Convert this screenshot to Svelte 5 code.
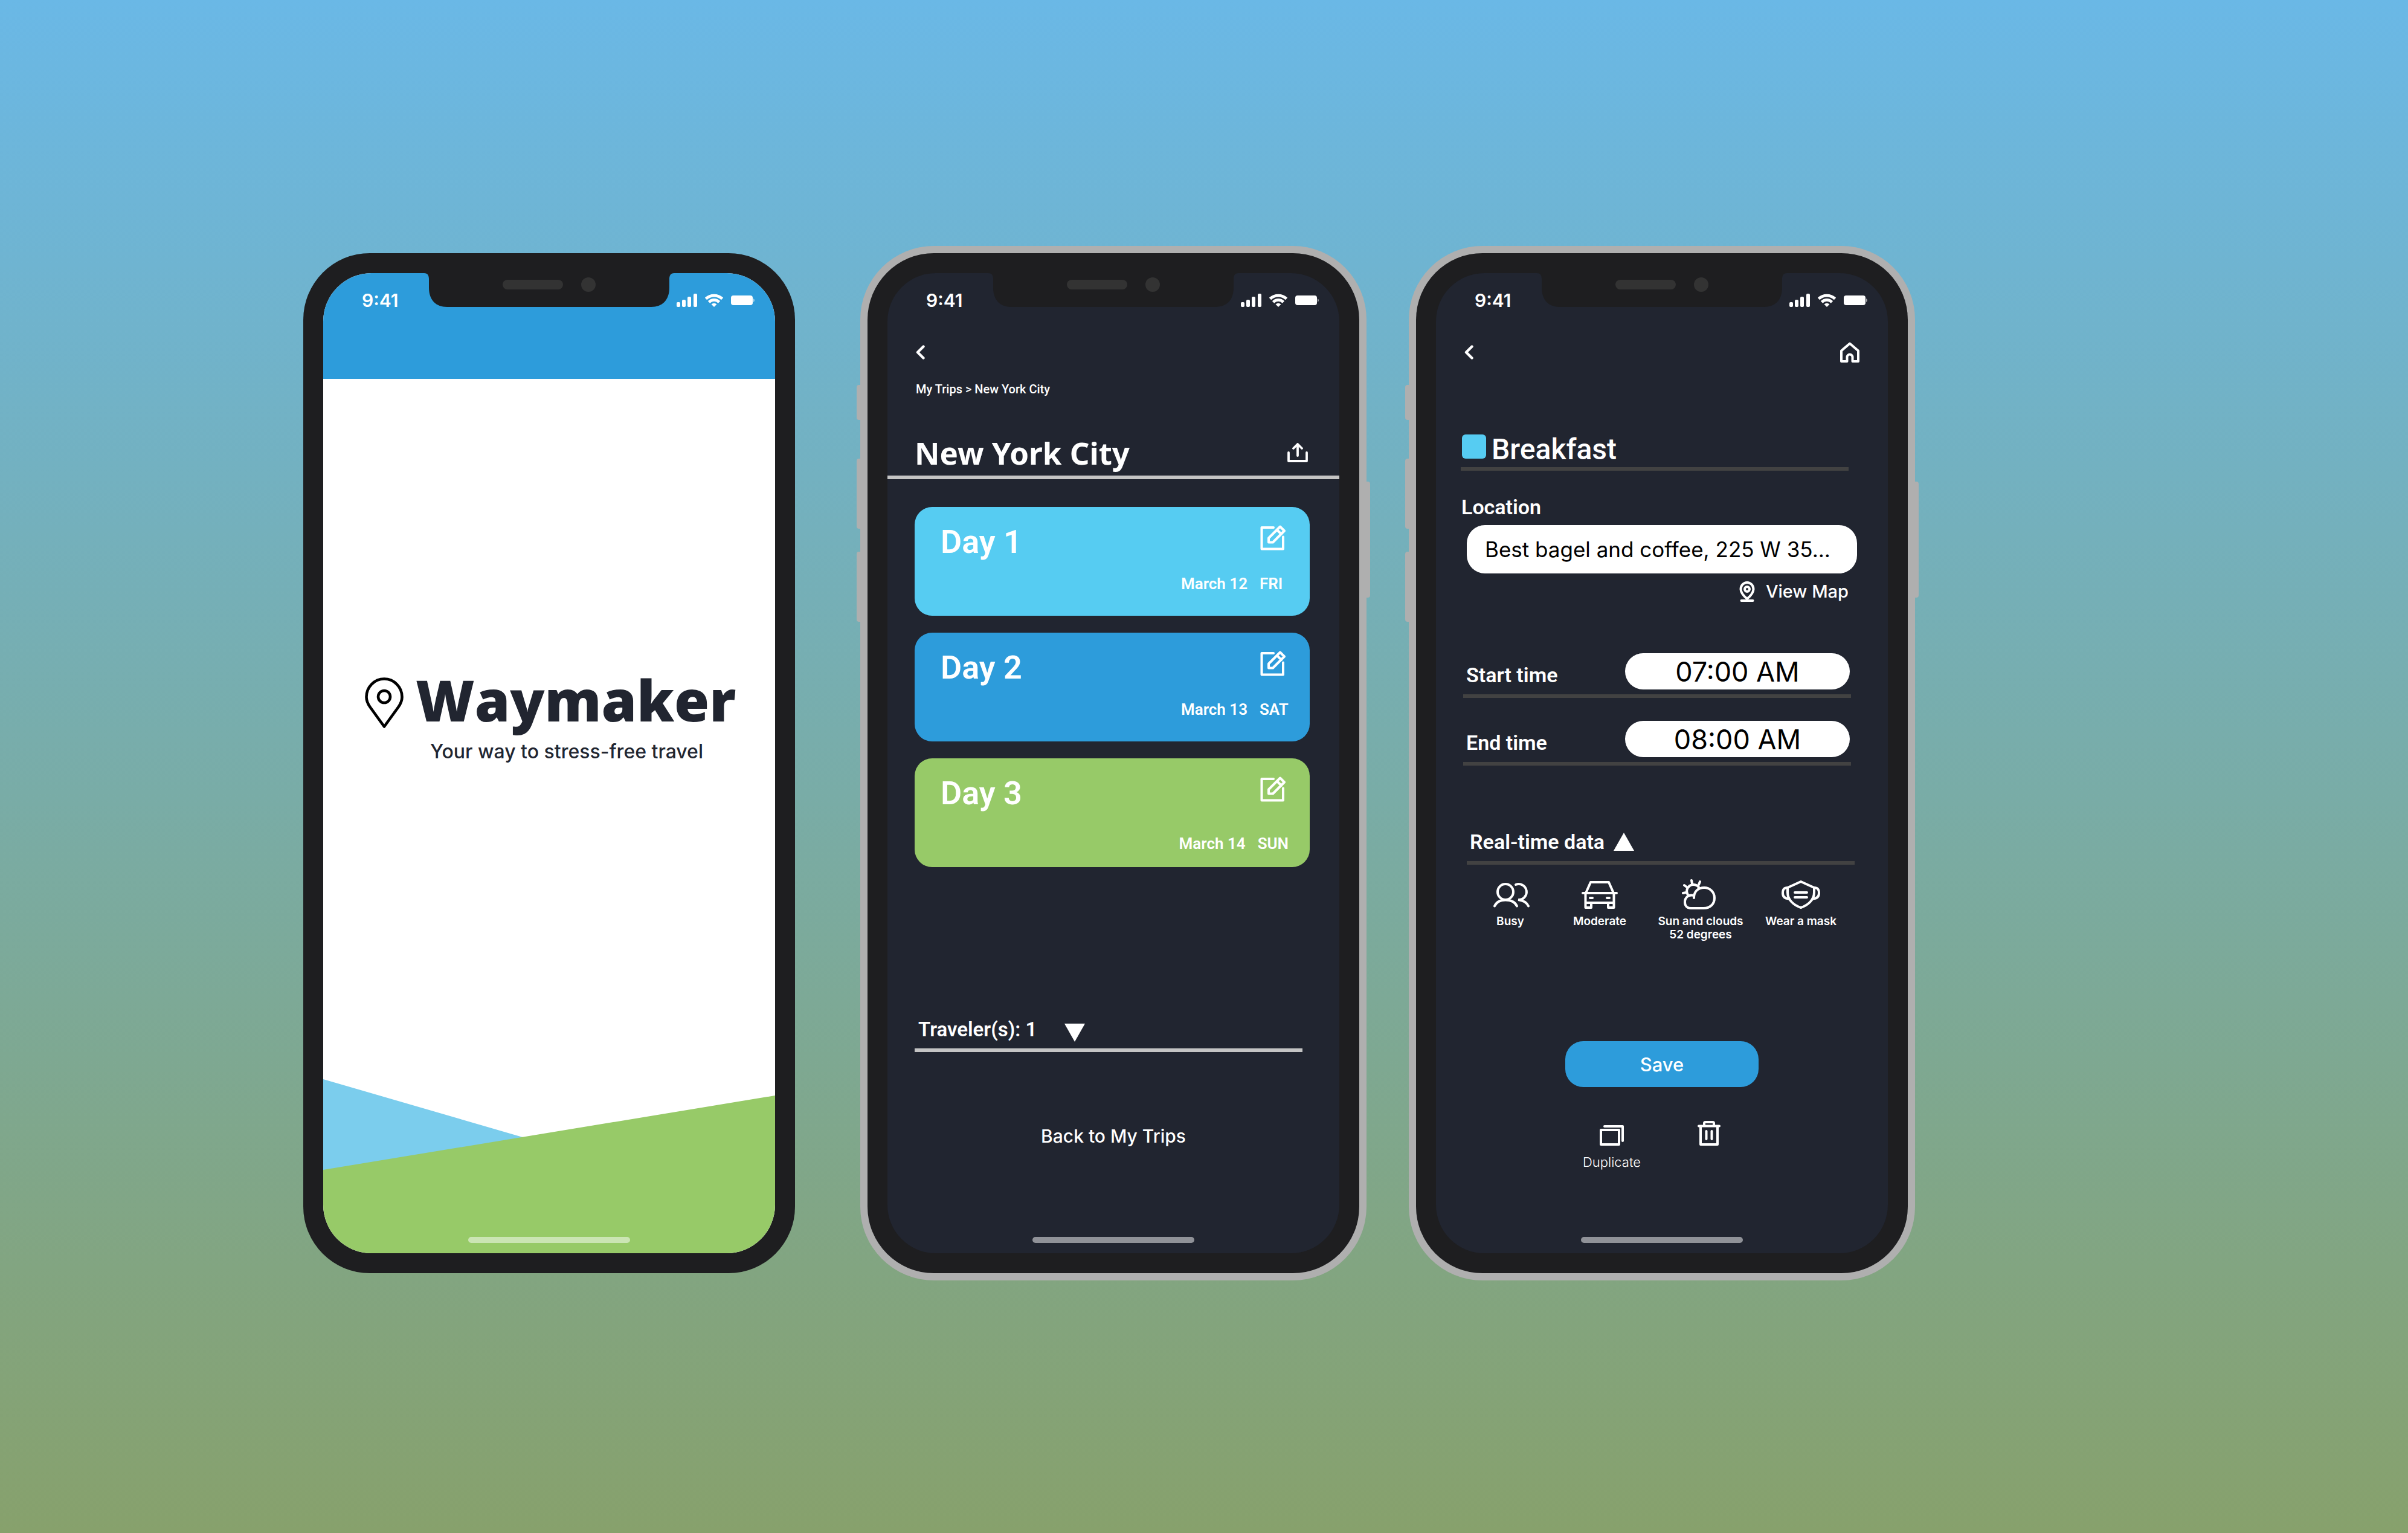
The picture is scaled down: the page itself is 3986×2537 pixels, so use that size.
<script>
  const days = [
    { name: 'Day 1', date: 'March 12', weekday: 'FRI', tone: 'sky' },
    { name: 'Day 2', date: 'March 13', weekday: 'SAT', tone: 'blue' },
    { name: 'Day 3', date: 'March 14', weekday: 'SUN', tone: 'green' }
  ];

  let location = $state('Best bagel and coffee, 225 W 35...');
  let startTime = $state('07:00 AM');
  let endTime = $state('08:00 AM');
</script>

{#snippet statusBar()}
  <div class="status">
    <span class="clock">9:41</span>
    <svg class="notch" width="414" height="56" viewBox="0 0 414 56" aria-hidden="true">
      <path class="notch-fill" d="M0 0C6 0 8 4 8 10V24C8 45 20 56 38 56H376C394 56 406 45 406 24V10C406 4 408 0 414 0Z" />
      <rect class="lens" x="130" y="11" width="100" height="16" rx="8" />
      <circle class="lens" cx="272" cy="19" r="12" />
    </svg>
    <div class="signals">
      <svg width="34" height="22" viewBox="0 0 34 22" fill="#fff" aria-hidden="true">
        <rect x="0" y="14" width="6" height="8" rx="2" />
        <rect x="9" y="10" width="6" height="12" rx="2" />
        <rect x="18" y="5" width="6" height="17" rx="2" />
        <rect x="28" y="0" width="6" height="22" rx="2" />
      </svg>
      <svg width="30" height="22" viewBox="0 0 30 22" fill="none" stroke="#fff" stroke-width="4.800" aria-hidden="true">
        <path d="M1.500 8.500A19.500 19.500 0 0 1 28.500 8.500" />
        <path d="M6.500 14A12 12 0 0 1 23.500 14" />
        <path d="M10.500 17.500Q15 14 19.500 17.500L15 22Z" fill="#fff" stroke="none" />
      </svg>
      <svg width="39" height="16" viewBox="0 0 39 16" fill="#fff" aria-hidden="true">
        <rect width="36" height="16" rx="4" />
        <path d="M37 5Q39 6 39 8T37 11Z" opacity="0.6" />
      </svg>
    </div>
  </div>
{/snippet}

{#snippet sideButtons()}
  <i class="key mute"></i>
  <i class="key up"></i>
  <i class="key down"></i>
  <i class="key power"></i>
{/snippet}

{#snippet backLink()}
  <a class="icon" href="#back" aria-label="Back">
    <svg width="15" height="24" viewBox="0 0 15 24" fill="none" stroke="#fff" stroke-width="4.400" stroke-linecap="round" stroke-linejoin="round">
      <path d="M12.500 2.500 3 12 12.500 21.500" />
    </svg>
  </a>
{/snippet}

<main>
  <section class="phone first" aria-label="Welcome">
    <div class="bezel">
      <div class="screen white">
        <header class="banner">{@render statusBar()}</header>
        <div class="brand">
          <svg width="64" height="84" viewBox="0 0 64 84" fill="none" stroke="#000" stroke-width="4.600" stroke-linejoin="round" aria-hidden="true">
            <path d="M32 2.500A29.500 30 0 0 1 61.500 32.500C61.500 39 59 44 55.500 49L32 81.500 8.500 49C5 44 2.500 39 2.500 32.500A29.500 30 0 0 1 32 2.500Z" />
            <circle cx="32" cy="32" r="10" />
          </svg>
          <div class="brand-text">
            <h1>Waymaker</h1>
            <p>Your way to stress-free travel</p>
          </div>
        </div>
        <svg class="hills" viewBox="0 0 748 288" aria-hidden="true">
          <path fill="#7bcded" d="M0 0 344 100 0 152Z" />
          <path fill="#97ca68" d="M0 150 748 27V288H0Z" />
        </svg>
        <div class="home-bar"></div>
      </div>
    </div>
  </section>

  <section class="phone framed" aria-label="Trip">
    {@render sideButtons()}
    <div class="bezel">
      <div class="screen dark">
        {@render statusBar()}
        <nav class="topbar">{@render backLink()}</nav>
        <p class="crumbs">My Trips &gt; New York City</p>
        <header class="trip">
          <h2>New York City</h2>
          <button class="icon" aria-label="Share">
            <svg width="34" height="32" viewBox="0 0 34 32" fill="none" stroke="#fff" stroke-width="3.800" stroke-linecap="round" stroke-linejoin="round">
              <path d="M2 16V30H32V16M17 21V2.500M10 9 17 2 24 9" />
            </svg>
          </button>
        </header>
        <div class="days">
          {#each days as day}
            <article class={['day', day.tone]}>
              <div class="day-top">
                <h3>{day.name}</h3>
                <button class="icon" aria-label="Edit {day.name}">
                  <svg width="42" height="42" viewBox="0 0 42 42" fill="none" stroke="#fff" stroke-width="4" stroke-linecap="round" stroke-linejoin="round">
                    <path d="M22 4H2.500V39.500H38V19.500" />
                    <path d="M33 2.500 40 9.500 21 28.500H14V21.500ZM28 8 35 15" />
                  </svg>
                </button>
              </div>
              <div class="day-date"><span>{day.date}</span><span class="weekday">{day.weekday}</span></div>
            </article>
          {/each}
        </div>
        <button class="travelers">
          <span>Traveler(s): 1</span>
          <svg width="34" height="30" viewBox="0 0 34 30" fill="#fff" aria-hidden="true"><path d="M0 0H34L17 30Z" /></svg>
        </button>
        <a class="back-trips" href="#trips">Back to My Trips</a>
        <div class="home-bar"></div>
      </div>
    </div>
  </section>

  <section class="phone framed" aria-label="Activity">
    {@render sideButtons()}
    <div class="bezel">
      <form class="screen dark" onsubmit={(e) => e.preventDefault()}>
        {@render statusBar()}
        <nav class="topbar">
          {@render backLink()}
          <a class="icon" href="#home" aria-label="Home">
            <svg width="32" height="34" viewBox="0 0 32 34" fill="none" stroke="#fff" stroke-width="4" stroke-linejoin="round">
              <path d="M2 14.500 16 2.500 30 14.500V32H20.500V25A4.500 4.500 0 0 0 11.500 25V32H2Z" />
            </svg>
          </a>
        </nav>
        <header class="activity">
          <span class="swatch"></span>
          <h2>Breakfast</h2>
        </header>
        <label class="location" for="location">Location</label>
        <input class="place" id="location" type="text" bind:value={location} />
        <a class="map" href="#map">
          <svg width="26" height="34" viewBox="0 0 26 34" fill="none" stroke="#fff" stroke-width="4" stroke-linecap="round" aria-hidden="true">
            <path d="M13 29C7 24 2.500 19 2.500 13A10.500 11 0 0 1 23.500 13C23.500 19 19 24 13 29Z" />
            <circle cx="13" cy="13" r="4" />
            <path d="M3.500 32H22.500" />
          </svg>
          <span>View Map</span>
        </a>
        <div class="times">
          <div class="time">
            <label for="start">Start time</label>
            <input id="start" type="text" bind:value={startTime} />
          </div>
          <div class="time">
            <label for="end">End time</label>
            <input id="end" type="text" bind:value={endTime} />
          </div>
        </div>
        <button class="realtime" type="button">
          <span>Real-time data</span>
          <svg width="34" height="30" viewBox="0 0 34 30" fill="#fff" aria-hidden="true"><path d="M17 0 34 30H0Z" /></svg>
        </button>
        <ul class="stats">
          <li>
            <svg width="60" height="50" viewBox="-2 -6 60 50" overflow="visible" fill="none" stroke="#fff" stroke-width="4" stroke-linecap="round" aria-hidden="true">
              <ellipse cx="20" cy="15" rx="13" ry="13" />
              <path d="M2 38.500C5 32 11 28.500 20 28.500S36 32 39 38.500M37 3A13 13 0 1 1 41 28C49 29 55 32 58 38.500" />
            </svg>
            Busy
          </li>
          <li>
            <svg width="60" height="50" viewBox="0 -3 60 50" fill="none" stroke="#fff" stroke-width="4" stroke-linecap="round" stroke-linejoin="round" aria-hidden="true">
              <path d="M2 20H58M7 20 15 2H45L53 20M6.500 20V44H16V36M53.500 20V44H44V36M6.500 36H53.500M14 28H18M42 28H46" />
            </svg>
            Moderate
          </li>
          <li>
            <svg width="56" height="50" viewBox="3 0 56 50" overflow="visible" fill="none" stroke="#fff" stroke-width="4" stroke-linecap="round" aria-hidden="true">
              <path d="M15 48H36C47 48 54 41 54 31S46 14 37 14C27 14 20 20 20 31M20 27C11 25 5 30 5 38C5 44 9 48 15 48" />
              <path d="M28.500 14A11 11 0 1 0 10 26M16 2 17 7M30 4 28 9M4 10 8 13M2 23 7 22" />
            </svg>
            <span>Sun and clouds<br />52 degrees</span>
          </li>
          <li>
            <svg width="64" height="50" viewBox="0 -2 64 50" fill="none" stroke="#fff" stroke-width="4" stroke-linecap="round" stroke-linejoin="round" aria-hidden="true">
              <path d="M32 2 54 12V20C54 32 44 41 32 45C20 41 10 32 10 20V12ZM22 20H42M22 28H42" />
              <path d="M54 12C60 12 62 15 62 21S58 30 52 30.500M10 12C4 12 2 15 2 21S6 30 12 30.500" />
            </svg>
            Wear a mask
          </li>
        </ul>
        <button class="save" type="submit">Save</button>
        <div class="actions">
          <button class="duplicate" type="button">
            <svg width="40" height="34" viewBox="0 0 40 34" fill="none" stroke="#fff" stroke-width="4" stroke-linecap="round" stroke-linejoin="round" aria-hidden="true">
              <path d="M2 8H32V32H2ZM8 2H38V26" />
            </svg>
            Duplicate
          </button>
          <button class="icon" type="button" aria-label="Delete">
            <svg width="38" height="41" viewBox="0 0 38 41" fill="none" stroke="#fff" stroke-width="4" stroke-linecap="round" stroke-linejoin="round">
              <path d="M2 8.500H36M11 8V4Q11 2 13 2H25Q27 2 27 4V8M5 9V39H33V9M14.500 17V30M23.500 17V30" />
            </svg>
          </button>
        </div>
        <div class="home-bar"></div>
      </form>
    </div>
  </section>
</main>

<style>
  :global(body) {
    margin: 0;
  }

  main {
    box-sizing: border-box;
    min-height: 100vh;
    padding: 407px 0 407px 490px;
    display: flex;
    align-items: flex-start;
    gap: 70px;
    background: linear-gradient(#6ab8e6, #87a16c);
    color: #fff;
    font-family: Inter, 'Liberation Sans', sans-serif;
  }

  h1,
  h2,
  h3,
  p,
  ul {
    margin: 0;
    padding: 0;
  }

  svg {
    display: block;
    flex: none;
  }

  a {
    color: inherit;
    text-decoration: none;
  }

  button {
    padding: 0;
    border: 0;
    background: none;
    color: inherit;
    font: inherit;
    cursor: pointer;
  }

  input {
    box-sizing: border-box;
    border: 0;
    border-radius: 30px;
    background: #fff;
    color: #000;
    font-family: inherit;
  }

  /* Device shell */
  .phone {
    position: relative;
    flex: none;
    padding: 12px;
    border-radius: 122px;
  }

  .first {
    margin-right: 26px;
  }

  .framed {
    background: #afafaf;
  }

  .key {
    position: absolute;
    left: -6px;
    width: 12px;
    border-radius: 4px 0 0 4px;
    background: #afafaf;
  }

  .mute {
    top: 230px;
    height: 58px;
  }

  .up {
    top: 352px;
    height: 116px;
  }

  .down {
    top: 506px;
    height: 116px;
  }

  .power {
    top: 390px;
    left: auto;
    right: -6px;
    height: 192px;
    border-radius: 0 4px 4px 0;
  }

  .bezel {
    position: relative;
    padding: 33px;
    border-radius: 110px;
    background: #1e1e20;
  }

  .screen {
    position: relative;
    display: flex;
    flex-direction: column;
    width: 748px;
    min-height: 1622px;
    border-radius: 80px;
    overflow: hidden;
  }

  .white {
    background: #fff;
  }

  .dark {
    background: #212530;
  }

  .status {
    display: grid;
    grid-template-columns: 1fr 414px 1fr;
    align-items: start;
    height: 56px;
  }

  .clock {
    padding: 30px 0 0 64px;
    font-size: 30px;
    line-height: 30px;
    font-weight: 600;
  }

  .notch-fill {
    fill: #1e1e20;
  }

  .lens {
    fill: #333;
  }

  .signals {
    display: flex;
    align-items: center;
    justify-content: flex-end;
    gap: 13px;
    padding: 34px 34px 0 0;
  }

  .home-bar {
    position: absolute;
    bottom: 17px;
    left: 50%;
    width: 268px;
    height: 10px;
    margin-left: -134px;
    border-radius: 5px;
    background: rgba(255, 255, 255, 0.5);
  }

  /* Welcome */
  .banner {
    height: 175px;
    background: #2d9cdb;
  }

  .brand {
    display: flex;
    align-items: flex-start;
    gap: 20px;
    padding: 483px 0 0 69px;
    color: #212530;
  }

  .brand svg {
    padding-top: 11px;
  }

  h1 {
    font-family: 'Open Sans', 'Noto Sans', sans-serif;
    font-size: 94px;
    line-height: 96px;
    font-weight: 800;
  }

  .brand-text p {
    padding: 18px 0 0 24px;
    font-size: 32px;
    line-height: 40px;
    font-weight: 500;
  }

  .hills {
    width: 100%;
    margin-top: auto;
  }

  /* Trip */
  .topbar {
    display: flex;
    align-items: center;
    justify-content: space-between;
    height: 34px;
    padding: 0 47px;
    margin-top: 58px;
  }

  .crumbs,
  h3,
  .day-date,
  .travelers,
  .realtime,
  .activity h2,
  label {
    font-family: Roboto, Inter, sans-serif;
  }

  .crumbs {
    padding: 32px 47px 0;
    font-size: 20px;
    line-height: 24px;
    font-weight: 500;
  }

  .trip {
    display: flex;
    align-items: center;
    justify-content: space-between;
    margin-top: 63px;
    padding: 0 52px 8px 45px;
    border-bottom: 6px solid #c4c4c4;
  }

  .trip h2 {
    font-family: 'Noto Sans', 'Open Sans', sans-serif;
    font-size: 51px;
    line-height: 60px;
    font-weight: 700;
  }

  .days {
    display: flex;
    flex-direction: column;
    gap: 28px;
    padding: 46px 49px 0 45px;
  }

  .day {
    box-sizing: border-box;
    min-height: 180px;
    padding: 28px 35px 0 43px;
    border-radius: 29px;
  }

  .sky {
    background: #56ccf2;
  }

  .blue {
    background: #2d9cdb;
  }

  .green {
    background: #97ca68;
  }

  .day-top {
    display: flex;
    align-items: flex-start;
    justify-content: space-between;
    padding-right: 5px;
  }

  h3 {
    font-size: 54px;
    line-height: 60px;
    font-weight: 600;
  }

  .day-top .icon {
    padding-top: 2px;
  }

  .day-date {
    display: flex;
    justify-content: flex-end;
    gap: 20px;
    padding-top: 24px;
    font-size: 26px;
    line-height: 30px;
    font-weight: 600;
  }

  .green .day-date {
    padding-top: 38px;
  }

  .weekday {
    min-width: 48px;
  }

  .travelers,
  .realtime {
    display: flex;
    font-weight: 600;
    line-height: 40px;
  }

  .travelers {
    align-items: flex-end;
    gap: 46px;
    margin: 249px 61px 0 45px;
    padding: 0 6px 11px;
    border-bottom: 6px solid #c4c4c4;
    font-size: 33px;
  }

  .back-trips {
    align-self: center;
    margin-top: 121px;
    font-size: 30px;
    line-height: 36px;
    font-weight: 500;
  }

  /* Activity */
  .activity {
    display: flex;
    align-items: flex-start;
    gap: 9px;
    margin: 119px 65px 0 41px;
    padding: 0 2px 4px;
    border-bottom: 6px solid #424242;
  }

  .swatch {
    width: 40px;
    height: 40px;
    border-radius: 6px;
    background: #56ccf2;
  }

  .activity h2 {
    font-size: 48px;
    line-height: 50px;
    font-weight: 500;
  }

  .location {
    margin: 40px 42px 0;
    font-size: 34px;
    line-height: 40px;
    font-weight: 600;
  }

  .place {
    height: 80px;
    margin: 10px 51px 0;
    padding: 0 30px;
    font-size: 35px;
  }

  .map {
    display: flex;
    align-items: center;
    align-self: flex-end;
    gap: 18px;
    margin: 12px 65px 0 0;
    font-size: 29px;
    line-height: 36px;
    font-weight: 500;
  }

  .times {
    display: flex;
    flex-direction: column;
    gap: 38px;
    margin: 84px 61px 0 45px;
  }

  .time {
    display: flex;
    align-items: flex-end;
    justify-content: space-between;
    padding: 0 2px 8px 5px;
    border-bottom: 6px solid #424242;
  }

  .time label {
    font-size: 34px;
    line-height: 48px;
    font-weight: 600;
  }

  .time input {
    width: 372px;
    height: 60px;
    padding: 0;
    font-size: 45px;
    text-align: center;
  }

  .realtime {
    align-items: center;
    gap: 15px;
    margin: 106px 55px 0 51px;
    padding: 0 5px 12px;
    border-bottom: 6px solid #424242;
    font-size: 34px;
  }

  .stats {
    display: grid;
    grid-template-columns: 148fr 148fr 186fr 146fr;
    margin: 24px 71px 0 49px;
    list-style: none;
    font-size: 19px;
    line-height: 22px;
    font-weight: 600;
    text-align: center;
  }

  .stats li {
    display: flex;
    flex-direction: column;
    align-items: center;
    gap: 9px;
  }

  .save {
    align-self: center;
    width: 320px;
    height: 76px;
    margin-top: 165px;
    border-radius: 30px;
    background: #2d9cdb;
    font-size: 31px;
    font-weight: 500;
  }

  .actions {
    display: flex;
    align-items: flex-start;
    gap: 94px;
    margin: 56px 0 0 243px;
  }

  .duplicate {
    display: flex;
    flex-direction: column;
    align-items: center;
    gap: 14px;
    padding-top: 7px;
    font-size: 22px;
    line-height: 26px;
    font-weight: 300;
  }
</style>
